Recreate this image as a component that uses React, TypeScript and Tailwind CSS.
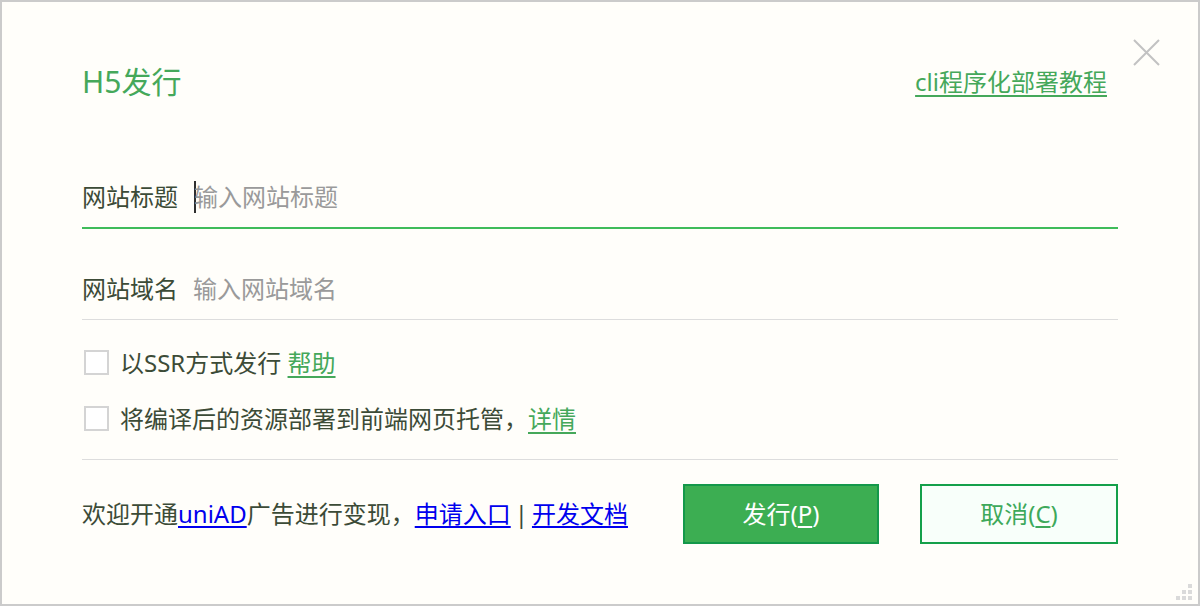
import React from "react";

const font = { fontFamily: '"Noto Sans", "Noto Sans CJK SC", sans-serif' };

const Checkbox = () => (
  <span className="w-[25px] h-[25px] border-2 border-[#d4d4d4] bg-white shrink-0" />
);

const App = () => {
  return (
    <div
      className="relative w-[1200px] h-[606px] border-2 border-[#cbcbcb] bg-[#fffefa] flex flex-col px-[80px] pt-[60px] text-[#3c4b37] text-[24px] leading-none"
      style={font}
    >
      {/* close */}
      <button className="absolute top-[36px] right-[38px] w-[28px] h-[28px]">
        <svg viewBox="0 0 28 28" className="w-full h-full">
          <path d="M2 2L27 27M27 2L2 27" stroke="#c2c2c2" strokeWidth="2" fill="none" />
        </svg>
      </button>

      {/* header */}
      <div className="flex items-center justify-between h-[40px]">
        <h1 className="text-[30px] text-[#45a85a] font-normal">H5发行</h1>
        <a className="text-[24px] text-[#45a85a] underline underline-offset-[4px] mr-[11px]">
          cli程序化部署教程
        </a>
      </div>

      {/* site title */}
      <div className="mt-[65px] h-[62px] flex items-center border-b-2 border-[#3fbc5a]">
        <span>网站标题</span>
        <span className="ml-[16px] w-[2px] h-[32px] bg-[#2f2f2f]" />
        <span className="-ml-[2px] text-[#9a9a9a]">输入网站标题</span>
      </div>

      {/* site domain */}
      <div className="mt-[30px] h-[61px] flex items-center border-b border-[#dddddd]">
        <span>网站域名</span>
        <span className="ml-[15px] text-[#9a9a9a]">输入网站域名</span>
      </div>

      {/* options */}
      <div className="mt-[30px] flex items-center gap-[11px] pl-[2px] h-[25px]">
        <Checkbox />
        <span>
          以SSR方式发行{" "}
          <a className="text-[#45a85a] underline underline-offset-[4px]">帮助</a>
        </span>
      </div>
      <div className="mt-[31px] flex items-center gap-[11px] pl-[2px] h-[25px]">
        <Checkbox />
        <span>
          将编译后的资源部署到前端网页托管，
          <a className="text-[#45a85a] underline underline-offset-[4px]">详情</a>
        </span>
      </div>

      <div className="mt-[28px] border-b border-[#dddddd]" />

      {/* footer */}
      <div className="mt-[24px] flex items-center">
        <p className="flex items-center">
          欢迎开通<a className="text-[#0000ee] underline underline-offset-[3px]">uniAD</a>广告进行变现，
          <a className="text-[#0000ee] underline underline-offset-[3px]">申请入口</a>
          <span className="mx-[4px]">|</span>
          <a className="text-[#0000ee] underline underline-offset-[3px]">开发文档</a>
        </p>
        <button className="ml-auto w-[196px] h-[60px] bg-[#3cae52] border-2 border-[#14984a] text-white text-[24px]">
          发行(<span className="underline underline-offset-[3px]">P</span>)
        </button>
        <button className="ml-[41px] w-[198px] h-[60px] bg-[#f8fffa] border-2 border-[#14a04a] text-[#3ea95a] text-[24px]">
          取消(<span className="underline underline-offset-[3px]">C</span>)
        </button>
      </div>

      {/* resize grip */}
      <div className="absolute right-[6px] bottom-[4px] grid grid-cols-3 gap-[2px]">
        <span className="w-[4px] h-[4px]" />
        <span className="w-[4px] h-[4px]" />
        <span className="w-[4px] h-[4px] bg-[#dadada]" />
        <span className="w-[4px] h-[4px]" />
        <span className="w-[4px] h-[4px] bg-[#dadada]" />
        <span className="w-[4px] h-[4px] bg-[#dadada]" />
        <span className="w-[4px] h-[4px] bg-[#dadada]" />
        <span className="w-[4px] h-[4px] bg-[#dadada]" />
        <span className="w-[4px] h-[4px] bg-[#dadada]" />
      </div>
    </div>
  );
};

export default App;
